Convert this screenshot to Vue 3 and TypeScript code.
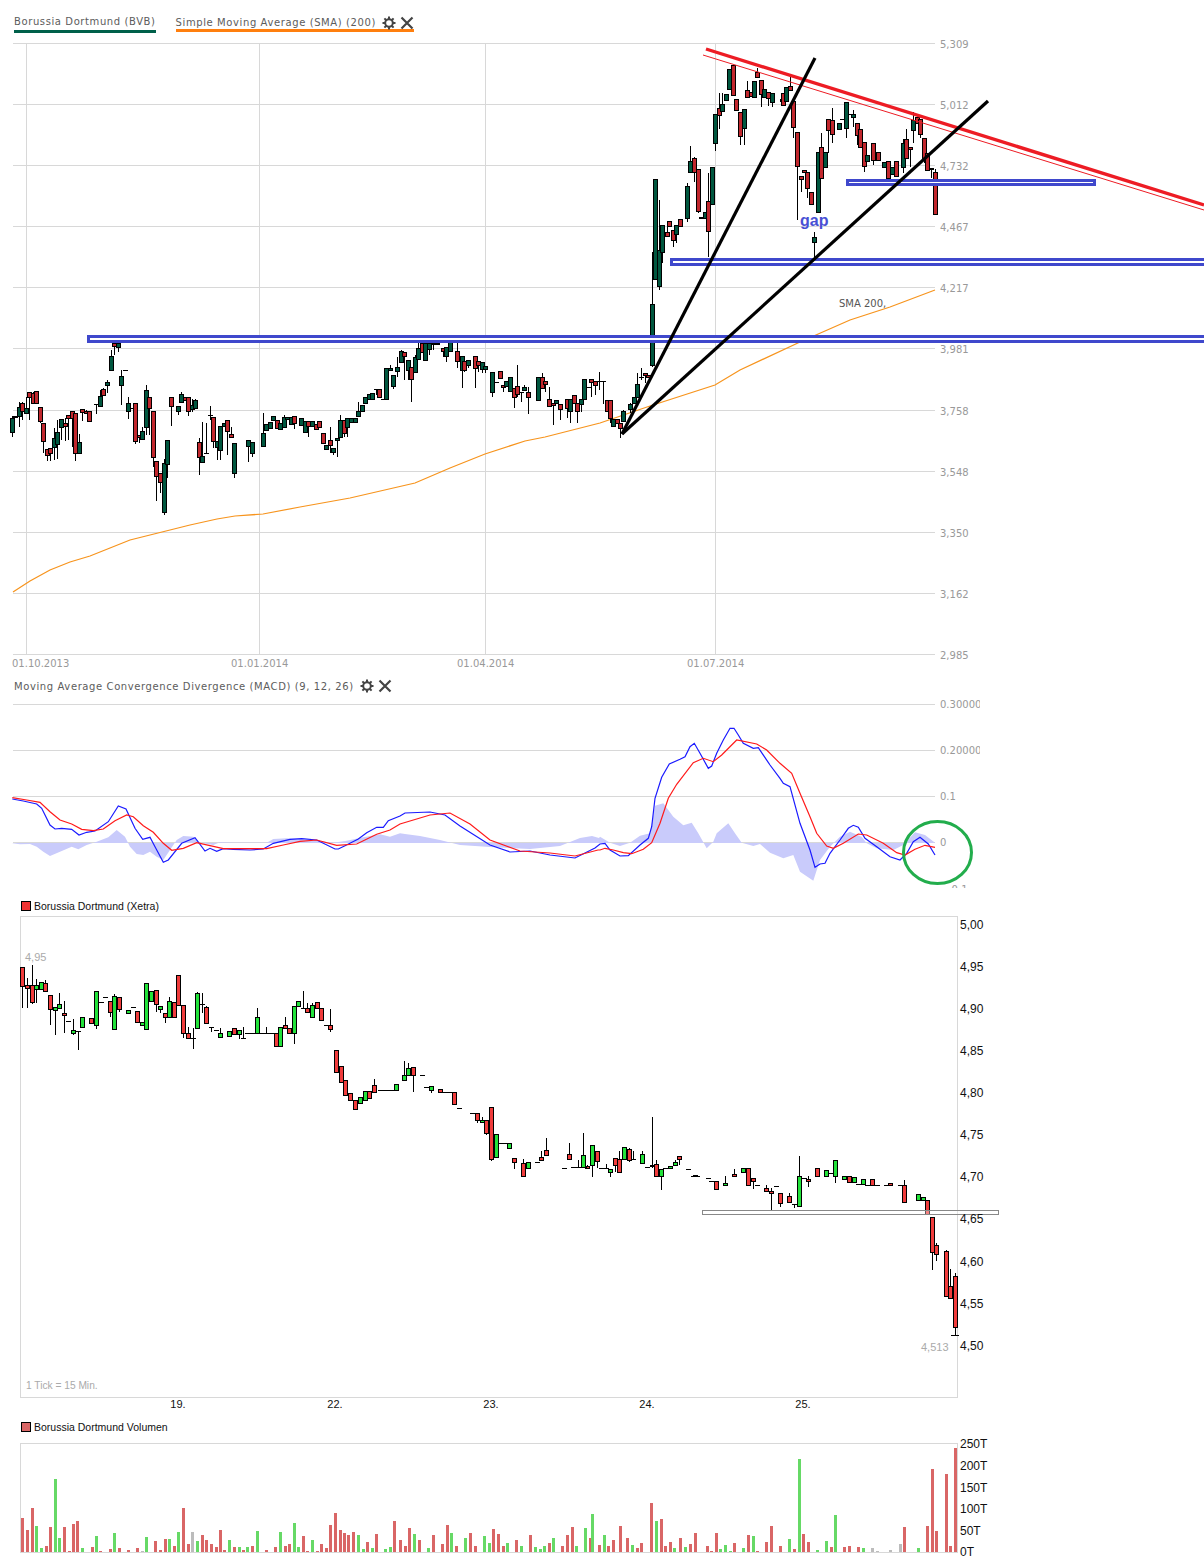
<script setup lang="ts">
interface Candle { x: number; t: number; b: number; h: number; l: number; up: boolean }
interface Bar { x: number; y: number; c: string }

function parse(src: string, ox: number, oy: number, k = 3): Candle[] {
  return src.trim().split(/\s+/).map((tok) => {
    const up = tok[0] === 'g'
    const [x, t, b, h, l] = tok.slice(1).split(',')
    const T = oy + +t / k
    const B = oy + +b / k
    return {
      x: Math.round(ox + +x / k) + 0.5,
      t: Math.round(T) + 0.5,
      b: Math.round(B) + 0.5,
      h: h ? Math.round(oy + +h / k) : Math.round(T),
      l: l ? Math.round(oy + +l / k) : Math.round(B),
      up,
    }
  })
}

const mainCandles: Candle[] = [
  ...parse(`g37,235,275,228,292 r44,228,230 g58,200,227,185,262 r67,190,212,185,240 g79,205,218,170,220 r88,157,170,,240 r99,160,190,155 r109,152,188
  r121,202,242,,250 r130,250,302,,338 r142,328,344,,362 r151,325,338,,362 g163,295,322,265,360 g172,275,313,240,358 g184,238,260,,300 r196,250,257,235,302 r204,226,235,225,300
  r216,214,233,,320 r226,218,338,,362 g238,307,338,282,338 r247,208,215,,242 r258,214,220,210 r268,214,242 g288,191,191,,222 g301,167,197,150 r310,148,166,145,165 g322,127,134,120,160
  g334,48,90,30,92 r343,10,18,,45 g355,8,20,,35 g364,108,134,90,195 r375,91,91 g385,190,212,170,238 g395,205,205 r406,190,302,,312 r417,284,292,,310 g427,274,298,262 g439,151,262,135,285
  r448,170,205,,285 r460,214,352,,380 r469,364,409,,482 r481,400,425,,460 g493,370,517,358,525 g502,301,371,,415 r514,172,199,170,258 g535,199,212,,225 g544,163,186,155 r555,172,180
  r565,172,212,,228 g577,195,206,178,215 g586,181,203,178 r598,305,352,295,405 g607,349,365,245,365 r619,340,340,250,340 g631,225,225,198,240 r640,232,304,,325 g650,304,320,,360
  g661,259,331,,360 g672,250,258 r682,241,274,240,345 r694,283,290,262 g703,310,398,,415 g745,301,319,,365 g757,307,338,,352 g790,280,317,220 g799,251,269 g811,247,265 g820,229,241
  r832,241,265 g841,250,268 g853,232,262,225 g862,232,238 g872,232,253 r883,229,250,,268 g904,235,256 g916,244,275 r925,244,259,,292 g937,244,259 r949,253,268 r958,244,262 r970,280,310
  g979,316,326,,328 r991,301,316,262,340 g1000,325,337,,345 g1012,295,301,,350 g1021,241,292,225 r1033,241,280,,290 g1042,235,262,,290 g1054,235,247 g1066,235,247 g1075,214,227,185,232
  g1087,196,214 g1096,172,190 g1108,163,178 g1117,160,178 r1129,148,148,,165 r1138,148,172 g1150,177,177 g1159,85,178 g1171,85,90,75 g1180,106,139,,148 g1192,82,94,50,112`, 0, 340),
  ...parse(`g64,63,97,60,100 r73,67,79,,150 g85,91,121,,150 r94,112,148,,217 g106,80,127,75,130 g115,55,88,40 r125,40,65,30 g136,40,91 g148,40,58,,75 g160,38,42,,60 g172,38,42
  r188,55,64,,80 g199,52,79,,97 g211,35,64,25 r232,64,94,25,115 g245,79,121,,175 r253,94,121,,125 g265,91,106,,115 r286,79,115,,175 r295,94,106,,125 g307,97,118,,130 g316,109,118,,130
  g337,127,187,,200 g349,157,157,,160 r361,124,145 r370,166,172,,185 g379,154,168 g391,142,184 r403,175,202,,235 r412,169,193,105,200 g424,187,187,,217 g433,172,181,165,183 r445,187,202,170,253
  g475,142,211 r487,142,175,130 r496,154,163,,185 r508,208,229,170,232 r520,220,226,,285 g529,211,220 r541,223,238,,270 r562,208,235,,265 g571,208,244,,280 r583,196,220,195 r592,220,244,,280
  g604,208,223,,245 g613,148,208 g625,172,172 r634,148,157,,200 r646,154,166,,195 g658,154,154,127,180 g670,154,154,,222 r682,211,244 r691,211,265,,280`, 380, 330),
  ...parse(`g10,748,768,,770 r20,748,760 r31,760,773,,805 g40,724,752,720,755 g61,703,718,700,730 g73,682,700 g82,643,682,610,685 g94,622,622,595,630 r105,610,616,,640 r115,616,622
  g127,403,584,250,590 g133,247,328 g136,28,328 g148,241,349,90,360 g157,166,247,,280 r170,187,199,165 r178,154,169 r190,181,211,,232 g199,166,193,,220 r211,148,169 g232,49,145,40,155`, 610, 170),
  ...parse(`g271,364,397,318 r283,355,397,350,425 r295,388,512,,520 r304,530,535 g315,515,535 r325,484,574,400,650 g337,382,493 g346,223,310,,332 r358,205,226,160,268 g367,193,214,160 g379,163,181
  g388,88,148 r400,76,166 r409,178,211 r421,217,289,,315 g433,208,265,,315 r442,151,172,122 r454,157,169 g463,124,172 r472,97,112,85 r484,121,163,,200 g493,148,170 r505,157,175,,198 g517,160,187,,200
  g547,178,184 r548,160,196 g559,142,184 r571,139,151,110 r580,184,262,,295 r592,277,379,,540 r604,409,418,,455 r613,391,397 r622,397,445,,475 r634,457,493 g643,592,607,575,655 g655,337,517
  r664,322,415,280 g676,337,382 r685,238,271,,340 r697,241,283,205,310 g718,250,268 g727,238,238 g739,187,265,,295 r751,222,222 g760,223,232,210,260 r772,250,286,,315 r781,268,322 r793,307,379,,395
  g802,346,364 r820,310,361,,375 r835,337,361 g853,367,382 r864,364,415,,435 g877,382,403 r889,364,409 g910,310,382,298,400 r919,298,355,268 r931,322,328,,380 g940,241,271,215,310 r952,232,250
  r961,238,283,,295 r973,295,361,,370 r982,340,391 r994,385,388,,415 r1006,397,521,388`, 600, 40),
]

const xetraCandles: Candle[] = [
  ...parse(`r67,82,139,,203 r81,136,145,115,205 r95,136,187,75,193 g109,136,148,118,188 g123,127,148 r136,130,154,120 r151,166,208,,254 g164,202,211,,284 g178,193,205,160 r192,220,226,183,278 g205,244,244
  g220,271,280,238,284 r233,274,274,,329 g247,232,262 r274,235,250 g289,154,256,,268 g302,187,187 g316,172,172 r330,184,217,,232 g343,169,268,162 r358,172,208,,215 g385,211,220 g400,202,202
  r412,214,247 g427,247,256 g439,130,268 g453,154,184 r467,151,193,,217 g481,199,208,,220 r495,220,232,,248 g508,184,232,170 r523,187,232 r535,106,196 r550,196,280,,293 r565,280,295,262
  r578,295,295,265,328 g592,160,265,156 g605,193,193,160,220 r619,202,250,198 g634,262,262,,275 g647,271,271 g661,280,292,265 g688,274,289,,292 r703,265,283,263 g716,271,283,,298 g730,295,295,262
  g772,232,280,205 g799,280,280,262 r827,280,319 g841,262,319 r854,256,265,232 r868,265,280 g881,199,280,,311 g895,184,199 g908,205,205,153 r922,205,217,190 g937,196,232,190 r950,187,205
  r964,205,241 r977,255,255 r991,256,268,208,275`, 0, 940),
  ...parse(`r336,1050,1072 r341,1066,1082 r345,1080,1095 r350,1093,1100 r355,1100,1109 g360,1097,1103 g365,1091,1100 r369,1091,1098 r374,1085,1092,1079 g380,1090,1090 g385,1090,1090 g392,1090,1090 g396,1084,1090`, 0, 0, 1),
  ...parse(`g13,76,89,33 g25,55,76,40 r40,52,76,,125 g65,76,76 g79,111,111 g94,109,121,,128 r121,118,127 r163,127,163 r178,174,174 g218,190,190 r232,190,211,,220 g247,211,217,200,220 r259,211,250,,254
  r274,172,328,,332 g287,253,322 g328,280,295 r343,325,337,,358 r370,340,379,327 g385,337,355 g412,335,335 r424,322,331,303 r439,301,316,265 g493,353,353 r508,313,328,279 g535,352,352,330 g550,316,352,250
  r562,349,355,345 g577,286,346,,380 r590,304,334,,355 g618,355,355,342 g631,358,367,,380 r646,325,346,,365 r658,328,367,304 g673,292,328 r688,298,331,295,335 g700,328,328,304 g727,313,340,304
  g742,352,352 g757,344,349,201,355 r769,343,379,330 g784,358,379,,419 g811,349,355 g826,337,346,330 r838,319,328,,345 g865,358,358 g880,377,377,,380 g892,377,377`, 400, 1050),
  ...parse(`g25,88,88 g45,106,106 g83,115,115 r109,124,148 g136,130,136,108 r163,103,109,87 g190,85,97 r205,85,136 r220,115,124,,146 g232,136,136 r259,145,154,135 r274,154,160,145,212 g289,139,139 r301,160,190,,200
  r328,169,187,160 g343,193,193,,205 g358,109,199,47 g372,115,115 r385,118,124,108,140 r412,85,109 g439,91,109 g453,100,100 g466,61,109,,128 g493,109,118 r508,109,127 g523,112,127 g535,133,133
  g550,118,133,,136 g562,136,136 r577,118,136 g590,136,136 g618,136,136 r631,130,136 g660,136,136 r673,136,187,120 g715,163,181 g730,172,181 r742,181,221 r757,232,337,,391 r769,316,343,308,362
  r799,334,469,330 r811,439,475,387,478 r826,409,562,400,585`, 680, 1140),
]

const flatRuns = [
  [245, 278, 1033], [380, 396, 1090], [420, 425, 1075], [440, 456, 1092], [470, 477, 1113], [498, 510, 1143],
  [571, 587, 1167], [599, 608, 1168], [663, 670, 1168], [709, 718, 1181], [951, 959, 1335],
]

function bars(src: string, ox: number, oy: number, k = 3): Bar[] {
  const colors: Record<string, string> = { r: '#d96666', g: '#66d966', s: '#bcbcbc' }
  return src.trim().split(/\s+/).map((tok) => {
    const [x, y] = tok.slice(1).split(',')
    return { x: Math.round(ox + +x / k) - 1, y: Math.round(oy + +y / k), c: colors[tok[0]] }
  })
}

const volumeBars: Bar[] = [
  ...bars(`r67,445 r82,480 r95,414 g109,468 g124,534 r137,528 r151,471 g164,327 g178,504 r193,471 r206,543 r220,462 r232,453 g247,534 r275,531 g289,498 r301,543 r331,537 g343,489 r358,534 r385,540 r412,534
  s427,543 g439,501 r466,513 r481,540 r496,507 g508,507 r523,528 g535,486 r550,414 r565,522 s577,486 g592,513 r605,495 r619,510 r634,522 r647,531 r661,480 r673,540 g688,510 r703,531 g716,531 r730,540
  g742,531 r757,528 g772,483 r799,540 r826,531 g841,486 r854,528 r868,522 g881,459 g895,531 r908,498 r922,543 g937,510 r950,543 r964,522 r977,534 r991,465 r1006,429 r1019,480 r1033,489 r1045,495 r1060,486
  g1075,495 g1088,537 r1102,516 g1115,534 r1129,492 g1156,537 g1171,531 r1183,453`, 0, 1370),
  ...bars(`r400,1540 r405,1546 r409,1528 g414,1534 r419,1540 g428,1548 r433,1535 r442,1544 r447,1525 g451,1533 r456,1546 g465,1538 r470,1533 r475,1546 g484,1536 g489,1543 r493,1529 r498,1534 r503,1546 g507,1543
  r516,1540 g521,1546 r530,1535 g535,1547 g540,1549 g544,1546 r549,1543 g553,1538 r562,1546 r567,1535 r572,1527 g576,1546 g585,1528 r590,1538 g592,1514 r599,1545 g604,1535 r608,1546 r613,1540 r620,1526
  r627,1538 g632,1545 r637,1548 r641,1543 r651,1503 g656,1521 r661,1519 r665,1546 r670,1542 g674,1548 r680,1538 g685,1547 r690,1544 r695,1533`, 0, 0, 1),
  ...bars(`r22,438 r34,453 r49,399 g61,447 g76,435 g91,453 r103,429 g130,444 r145,405 g160,408 r172,453 r199,426 r214,378 r241,438 g268,417 r283,447 g298,177 r310,402 r325,426 g352,450 g379,423 r394,441 g406,345
  r433,441 r448,438 r475,441 g490,444 s517,444 s532,453 s571,450 s601,432 r613,381 g655,444 r682,378 r697,207 r709,393 r739,222 r751,438 r766,144`, 700, 1400),
]

function poly(src: string, ox: number, oy: number, k = 3): string {
  return src.trim().split(/\s+/).map((p) => {
    const [x, y] = p.split(',')
    return `${(ox + +x / k).toFixed(1)},${(oy + +y / k).toFixed(1)}`
  }).join(' ')
}

const blue = [
  poly(`37,447 70,453 110,462 125,475 150,525 165,537 185,535 215,538 237,555 260,547 285,543 325,515 355,468 378,477 405,535 428,568 450,562 465,590 490,637 505,630 545,580 585,563 615,603 630,595 650,604 670,596 700,598 750,600 790,597 820,580 870,568 905,566 950,570 1005,597 1015,597 1035,587 1075,567 1100,548 1130,532 1150,532 1165,512 1200,498`, 0, 650),
  poly(`405,813 430,812 445,815 460,826 490,845 510,852 530,851 550,855 575,858 595,848 600,844`, 0, 0, 1),
  poly(`0,462 15,460 30,480 60,498 85,497 120,465 145,445 155,410 165,325 185,262 208,222 240,208 255,200 270,170 283,160 300,190 325,235 335,228 350,190 370,150 390,115 402,115 415,135 430,160 460,175 475,173 510,225 540,265 550,280 570,290 600,400 630,480 645,532 660,522 675,520 690,490 720,450 745,415 760,406 775,412 795,445 830,470 870,500 900,510 920,490 940,455 960,442 985,462 1005,495`, 600, 690),
].join(' ')

const red = [
  poly(`37,443 80,450 120,457 150,485 180,510 215,522 245,538 280,542 310,537 345,512 380,495 400,500 430,527 460,547 490,580 515,601 550,595 590,578 630,587 670,596 750,596 800,596 850,585 900,574 950,570 1010,586 1070,582 1130,553 1170,540 1200,522`, 0, 650),
  poly(`430,815 450,813 470,824 490,840 520,851 550,853 575,856 598,850`, 0, 0, 1),
  poly(`0,480 15,475 40,480 70,488 95,491 130,478 155,458 180,400 205,325 230,283 280,218 310,205 340,215 365,195 410,150 470,162 500,180 540,220 575,250 600,310 630,380 650,430 680,468 700,475 730,460 775,432 800,435 850,460 890,488 915,495 945,478 975,466 1005,472`, 600, 690),
].join(' ')

const hist = '13,843 ' + [
  poly(`37,580 60,583 90,582 110,590 130,605 150,618 180,605 215,590 235,598 260,585 290,575 325,562 350,540 375,560 390,590 410,612 430,615 450,605 470,620 490,630 510,600 530,570 550,558 580,560 600,578 640,585 660,577 700,578 800,578 820,567 860,565 900,567 950,572 1000,578 1040,572 1090,562 1140,553 1170,560 1200,550`, 0, 650),
  poly(`405,834 420,836 440,840 460,845 490,847 530,849 560,846 580,838 592,836 599,838`, 0, 0, 1),
  poly(`0,440 30,458 60,468 90,458 120,437 150,430 165,347 190,340 220,380 250,406 275,398 295,430 320,475 340,455 350,430 385,400 405,430 425,458 460,468 480,462 510,488 550,505 580,495 600,545 640,572 660,510 690,470 720,440 750,425 785,440 800,460 830,475 880,480 910,465 945,427 975,435 1005,458`, 600, 690),
].join(' ') + ' 935,843'

const sma = '13,592 30,581 50,570 70,562 90,556 110,548 130,540 150,535 190,525 217,519 235,516 263,514 300,507 350,498 415,483 450,468 485,454 525,441 545,437 600,423 650,406 715,385 740,370 800,342 850,320 890,307 935,290'

const mainGrid = [
  { y: 43, t: '5,309' }, { y: 104, t: '5,012' }, { y: 165, t: '4,732' }, { y: 226, t: '4,467' }, { y: 287, t: '4,217' }, { y: 348, t: '3,981' },
  { y: 410, t: '3,758' }, { y: 471, t: '3,548' }, { y: 532, t: '3,350' }, { y: 593, t: '3,162' }, { y: 654, t: '2,985' },
]
const mainDates = [
  { x: 26, lx: 12, t: '01.10.2013' }, { x: 259, lx: 231, t: '01.01.2014' }, { x: 485, lx: 457, t: '01.04.2014' }, { x: 715, lx: 687, t: '01.07.2014' },
]
const macdGrid = [
  { y: 704, t: '0.30000' }, { y: 750, t: '0.20000' }, { y: 796, t: '0.1' }, { y: 842, t: '0' },
]
const xetraLabels = [
  { y: 925, t: '5,00' }, { y: 967, t: '4,95' }, { y: 1009, t: '4,90' }, { y: 1051, t: '4,85' }, { y: 1093, t: '4,80' }, { y: 1135, t: '4,75' },
  { y: 1177, t: '4,70' }, { y: 1219, t: '4,65' }, { y: 1262, t: '4,60' }, { y: 1304, t: '4,55' }, { y: 1346, t: '4,50' },
]
const dayLabels = [
  { x: 178, t: '19.' }, { x: 335, t: '22.' }, { x: 491, t: '23.' }, { x: 647, t: '24.' }, { x: 803, t: '25.' },
]
const volLabels = [
  { y: 1444, t: '250T' }, { y: 1466, t: '200T' }, { y: 1488, t: '150T' }, { y: 1509, t: '100T' }, { y: 1531, t: '50T' }, { y: 1552, t: '0T' },
]
const gearPath = 'M7 .5V3M7 11v2.5M.5 7H3M11 7h2.5M2.4 2.4 4 4M10 10l1.6 1.6M2.4 11.6 4 10M10 4l1.6-1.6'
</script>

<template>
  <div class="page">
    <div class="legend top">
      <span class="tag tag-green">Borussia Dortmund (BVB)</span>
      <span class="tag tag-orange">
        <span>Simple Moving Average (SMA) (200)</span>
        <svg class="gear" viewBox="0 0 14 14"><circle cx="7" cy="7" r="3.8" /><path :d="gearPath" /></svg>
        <svg class="cross" viewBox="0 0 14 14"><path d="M1.5 1.5l11 11M12.5 1.5l-11 11" /></svg>
      </span>
    </div>

    <svg class="chart main" viewBox="0 34 1204 642" width="1204" height="642">
      <line v-for="g in mainGrid" :key="g.y" class="grid" x1="13" x2="935" :y1="g.y + 0.5" :y2="g.y + 0.5" />
      <line v-for="d in mainDates" :key="d.x" class="grid" :x1="d.x + 0.5" :x2="d.x + 0.5" y1="43" y2="654" />
      <text v-for="g in mainGrid" :key="'l' + g.y" class="axis" x="940" :y="g.y + 5">{{ g.t }}</text>
      <text v-for="d in mainDates" :key="'d' + d.x" class="axis" :x="d.lx" y="667">{{ d.t }}</text>
      <polyline class="sma" :points="sma" />
      <g v-for="(c, i) in mainCandles" :key="i">
        <line class="wick" :x1="c.x" :x2="c.x" :y1="c.h" :y2="c.l" />
        <rect v-if="c.b > c.t" :class="c.up ? 'dark-up' : 'dark-down'" :x="c.x - 2" :y="c.t" width="4" :height="c.b - c.t" />
        <line v-else class="wick" :x1="c.x - 2.5" :x2="c.x + 2.5" :y1="c.t" :y2="c.t" />
      </g>
      <line class="red-thick" x1="706" y1="49" x2="1204" y2="205" />
      <line class="red-thin" x1="703" y1="55" x2="1204" y2="210" />
      <rect class="zone" x="88.5" y="336.5" width="1130" height="5" />
      <rect class="zone" x="671.5" y="259.5" width="550" height="5" />
      <rect class="zone" x="847.5" y="180.5" width="247" height="4" />
      <line class="black" x1="622" y1="434" x2="815" y2="58" />
      <line class="black" x1="622" y1="434" x2="988" y2="101" />
      <text class="gap" x="800" y="226">gap</text>
      <text class="sma-label" x="839" y="307">SMA 200,</text>
    </svg>

    <div class="legend macd-legend">
      <span class="tag">
        <span>Moving Average Convergence Divergence (MACD) (9, 12, 26)</span>
        <svg class="gear" viewBox="0 0 14 14"><circle cx="7" cy="7" r="3.8" /><path :d="gearPath" /></svg>
        <svg class="cross" viewBox="0 0 14 14"><path d="M1.5 1.5l11 11M12.5 1.5l-11 11" /></svg>
      </span>
    </div>

    <svg class="chart macd" viewBox="0 696 1204 192" width="1204" height="192">
      <line v-for="g in macdGrid" :key="g.y" class="grid" x1="13" x2="935" :y1="g.y + 0.5" :y2="g.y + 0.5" />
      <svg x="936" y="696" width="44" height="192" viewBox="936 696 44 192">
        <text v-for="g in macdGrid" :key="'l' + g.y" class="axis" x="940" :y="g.y + 4">{{ g.t }}</text>
        <text class="axis" x="948" y="893">-0.1</text>
      </svg>
      <polygon class="hist" :points="hist" />
      <polyline class="macd-blue" :points="blue" />
      <polyline class="macd-red" :points="red" />
      <ellipse class="circle" cx="937.5" cy="852.5" rx="34" ry="31" />
    </svg>

    <div class="sub-legend xetra-legend">
      <i class="swatch swatch-red"></i>Borussia Dortmund (Xetra)
    </div>

    <svg class="chart xetra" viewBox="0 916 1204 496" width="1204" height="496">
      <rect class="frame" x="20.5" y="916.5" width="937" height="481" />
      <g v-for="(c, i) in xetraCandles" :key="i">
        <line class="wick" :x1="c.x" :x2="c.x" :y1="c.h" :y2="c.l" />
        <rect v-if="c.b > c.t" :class="c.up ? 'bright-up' : 'bright-down'" :x="c.x - 2" :y="c.t" width="4" :height="c.b - c.t" />
        <line v-else class="wick" :x1="c.x - 2.5" :x2="c.x + 2.5" :y1="c.t" :y2="c.t" />
      </g>
      <line v-for="r in flatRuns" :key="r[0]" class="wick" :x1="r[0]" :x2="r[1]" :y1="r[2] + 0.5" :y2="r[2] + 0.5" />
      <rect class="support" x="702" y="1210" width="296" height="4.5" />
      <text class="hint" x="25" y="961">4,95</text>
      <text class="hint" x="921" y="1351">4,513</text>
      <text class="hint small" x="26" y="1389">1 Tick = 15 Min.</text>
      <text v-for="l in xetraLabels" :key="l.y" class="price" x="960" :y="l.y + 4">{{ l.t }}</text>
      <text v-for="d in dayLabels" :key="d.x" class="day" :x="d.x" y="1408">{{ d.t }}</text>
    </svg>

    <div class="sub-legend volume-legend">
      <i class="swatch swatch-vol"></i>Borussia Dortmund Volumen
    </div>

    <svg class="chart volume" viewBox="0 1436 1204 122" width="1204" height="122">
      <rect class="frame" x="20.5" y="1443.5" width="937" height="109" />
      <rect v-for="(b, i) in volumeBars" :key="i" :x="b.x" :y="b.y" width="3" :height="1552 - b.y" :fill="b.c" />
      <text v-for="l in volLabels" :key="l.y" class="price" x="960" :y="l.y + 4">{{ l.t }}</text>
    </svg>
  </div>
</template>

<style>
html, body { margin: 0; background: #fff; }
</style>

<style scoped>
.page {
  width: 1204px;
  height: 1558px;
  overflow: hidden;
  display: flex;
  flex-direction: column;
  background: #fff;
  font-family: "DejaVu Sans", Verdana, sans-serif;
}
.chart { display: block; flex: none; shape-rendering: crispEdges; }
.legend { display: flex; color: #5c5c5c; font-size: 10px; letter-spacing: 0.6px; }
.top { height: 34px; padding: 15px 0 0 14px; box-sizing: border-box; gap: 20px; align-items: flex-start; }
.tag { display: inline-flex; align-items: center; height: 14px; gap: 4px; white-space: nowrap; }
.tag-green { height: 13px; padding-bottom: 2px; border-bottom: 3px solid #00604a; }
.tag-orange { height: 13px; margin-top: 1px; border-bottom: 3px solid #ff7f0e; }
.macd-legend { height: 20px; padding: 3px 0 0 14px; box-sizing: border-box; }
.gear, .cross { width: 14px; height: 14px; flex: none; fill: none; stroke: #444; shape-rendering: geometricPrecision; }
.gear { stroke-width: 2; margin-left: 2px; }
.cross { stroke-width: 2.2; }
.grid { stroke: #d8d8d8; stroke-width: 1; }
.axis { font-size: 10px; fill: #999; font-family: "DejaVu Sans", Verdana, sans-serif; }
.sma { fill: none; stroke: #f7941d; stroke-width: 1.25; shape-rendering: geometricPrecision; }
.wick { stroke: #000; stroke-width: 1; }
.dark-up { fill: #00573f; stroke: #000; }
.dark-down { fill: #c1272d; stroke: #000; }
.bright-up { fill: #22e23a; stroke: #000; }
.bright-down { fill: #f03c3c; stroke: #000; }
.red-thick { stroke: #ed1c24; stroke-width: 3.4; shape-rendering: geometricPrecision; }
.red-thin { stroke: #ed1c24; stroke-width: 1; shape-rendering: geometricPrecision; }
.zone { fill: #fff; stroke: #3f48cc; stroke-width: 3; }
.black { stroke: #000; stroke-width: 3.2; shape-rendering: geometricPrecision; }
.gap { font: bold 16px "Liberation Sans", Arial, sans-serif; fill: #4850d4; }
.sma-label { font-size: 10px; fill: #555; font-family: "DejaVu Sans", Verdana, sans-serif; }
.hist { fill: #c9cbfb; stroke: none; shape-rendering: geometricPrecision; }
.macd-blue { fill: none; stroke: #1a1aff; stroke-width: 1.2; shape-rendering: geometricPrecision; }
.macd-red { fill: none; stroke: #ff1a1a; stroke-width: 1.2; shape-rendering: geometricPrecision; }
.circle { fill: none; stroke: #22ad4c; stroke-width: 3; shape-rendering: geometricPrecision; }
.sub-legend {
  display: flex;
  align-items: center;
  gap: 3px;
  padding-left: 21px;
  font-family: "Liberation Sans", Arial, sans-serif;
  font-size: 10.5px;
  color: #111;
  box-sizing: border-box;
}
.xetra-legend { height: 28px; padding-top: 8px; }
.volume-legend { height: 24px; padding-top: 5px; }
.swatch { width: 8px; height: 8px; border: 1px solid #000; flex: none; }
.swatch-red { background: #ee3333; }
.swatch-vol { background: #d96666; }
.frame { fill: #fff; stroke: #d8d8d8; stroke-width: 1.5; }
.support { fill: #fff; fill-opacity: 0.35; stroke: #888; stroke-width: 1; }
.hint { font: 11px "Liberation Sans", Arial, sans-serif; fill: #aaa; }
.small { font-size: 10.2px; }
.price { font: 12px "Liberation Sans", Arial, sans-serif; fill: #111; }
.day { font: 11px "Liberation Sans", Arial, sans-serif; fill: #111; text-anchor: middle; }
</style>
